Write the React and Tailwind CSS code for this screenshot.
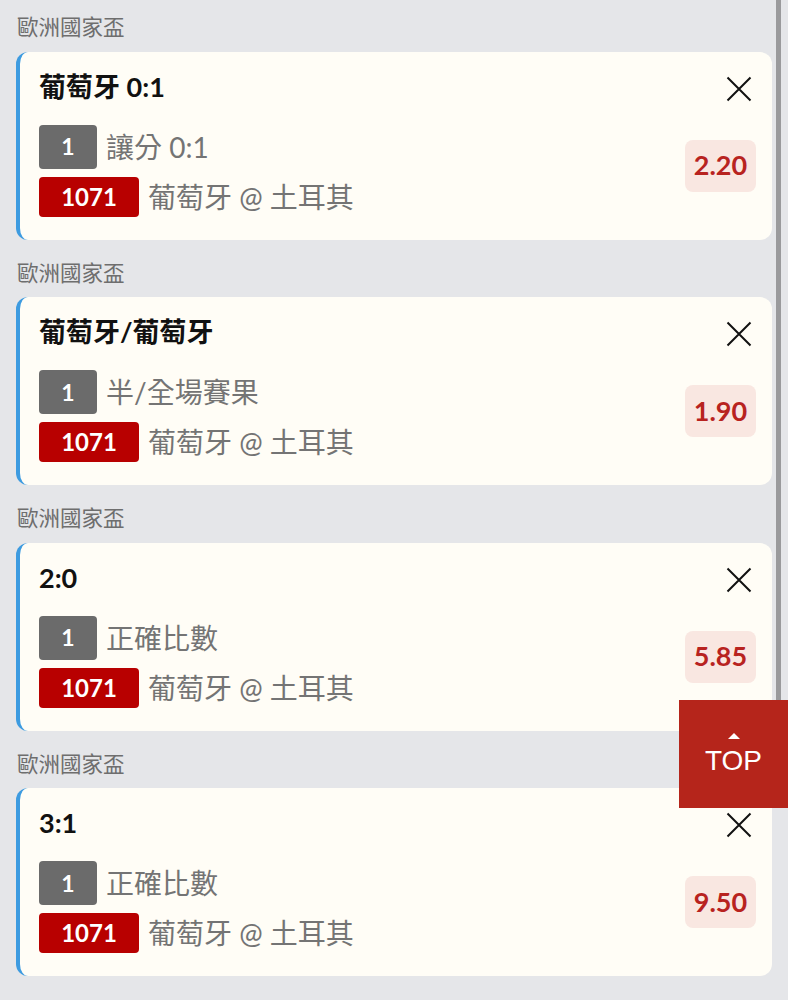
import React from "react";

const bets = [
  { title: "葡萄牙 0:1", market: "讓分 0:1", odds: "2.20" },
  { title: "葡萄牙/葡萄牙", market: "半/全場賽果", odds: "1.90" },
  { title: "2:0", market: "正確比數", odds: "5.85" },
  { title: "3:1", market: "正確比數", odds: "9.50" },
];

const CloseIcon = () => (
  <svg width="26" height="26" viewBox="0 0 26 26" fill="none">
    <path d="M1.5 1.5 24.5 24.5M24.5 1.5 1.5 24.5" stroke="#111" strokeWidth="2" />
  </svg>
);

const BetCard = ({ title, market, odds }) => (
  <div>
    {/* 賽事名稱 */}
    <div className="h-[57.5px] pl-[1px] pt-[21px] text-[21.5px] leading-[24px] text-[#6e6e6e]">
      歐洲國家盃
    </div>
    <div className="flex h-[188px] rounded-xl border-l-4 border-[#3d9be0] bg-[#fffdf6]">
      <div className="flex flex-1 flex-col pl-[19px] pt-[19px]">
        <div className="text-[27px] font-bold leading-[32px] text-[#111]">{title}</div>
        <div className="mt-[22px] flex items-center gap-[9px]">
          <span className="flex h-[44px] w-[58px] items-center justify-center rounded-[4px] bg-[#6b6b6b] text-[23px] font-bold text-white">
            1
          </span>
          <span className="text-[28px] leading-[40px] text-[#747474]">{market}</span>
        </div>
        <div className="mt-[8px] flex items-center gap-[9px]">
          <span className="flex h-[40px] w-[100px] items-center justify-center rounded-[4px] bg-[#b80000] text-[24px] font-bold text-white">
            1071
          </span>
          <span className="text-[28px] leading-[40px] text-[#747474]">葡萄牙 @ 土耳其</span>
        </div>
      </div>
      <div className="flex flex-col items-end pr-[16px] pt-[24px]">
        <div className="mr-[4px]">
          <CloseIcon />
        </div>
        <div className="mt-[38px] flex h-[52px] w-[71px] items-center justify-center rounded-lg bg-[#f9e7e1] text-[27px] font-bold text-[#b8231f]">
          {odds}
        </div>
      </div>
    </div>
  </div>
);

export default function App() {
  return (
    <div className="relative h-[1000px] overflow-hidden bg-[#e5e6e9] font-['Lato','Noto_Sans_CJK_TC',sans-serif]">
      <div className="-mt-[6px] flex flex-col px-4">
        {bets.map((b, i) => (
          <BetCard key={i} {...b} />
        ))}
      </div>

      {/* 捲軸 */}
      <div className="absolute left-[776px] top-0 h-[740px] w-[5px] bg-[#9a9a9c]" />

      {/* 回到頂部 */}
      <div className="absolute left-[679px] top-[700px] flex h-[108px] w-[109px] flex-col items-center justify-center bg-[#b5251b] text-white">
        <svg width="12" height="6" viewBox="0 0 12 6" className="mt-[2px]">
          <path d="M6 0 12 6H0Z" fill="#fff" />
        </svg>
        <span className="mt-[6px] font-['Liberation_Sans',sans-serif] text-[28px] leading-[32px]">TOP</span>
      </div>
    </div>
  );
}
